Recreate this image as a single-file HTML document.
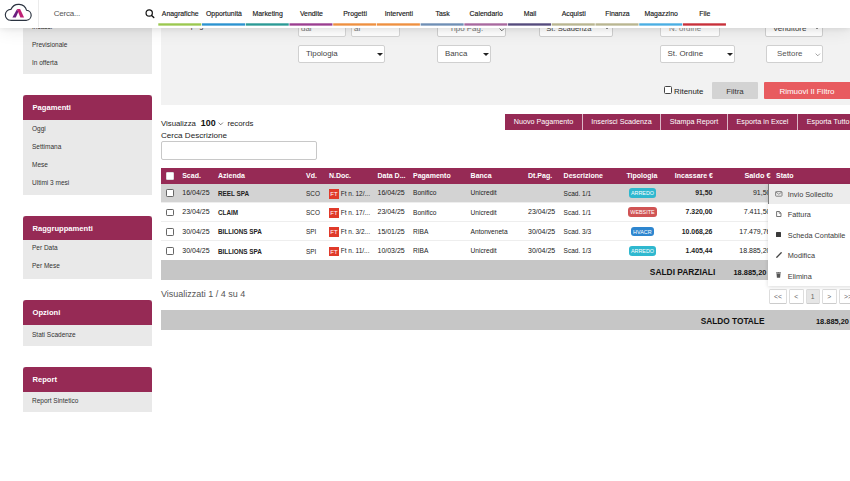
<!DOCTYPE html>
<html><head><meta charset="utf-8">
<style>
*{box-sizing:border-box;margin:0;padding:0}
html,body{width:850px;height:481px;overflow:hidden;background:#fff;font-family:"Liberation Sans",sans-serif;color:#222}
.a{position:absolute;white-space:nowrap}
#hdr{position:absolute;left:0;top:0;width:850px;height:28px;background:#fff;z-index:10;box-shadow:0 1px 5px rgba(0,0,0,0.07),0 2px 18px rgba(0,0,0,0.09)}
.nav{position:absolute;top:0;height:28px;width:43.7px}
.nav span{position:absolute;left:0;right:0;top:9.65px;text-align:center;font-size:6.9px;font-weight:normal;color:#1a1a1a;-webkit-text-stroke:0.15px #1a1a1a}
.nav i{position:absolute;left:0.5px;right:0.5px;top:23.2px;height:2.5px}
/* sidebar */
.sb{position:absolute;left:23px;width:129px;background:#e9e9e9}
.sbh{position:absolute;left:23px;width:129px;height:24.5px;background:#962a55;border-radius:3px 3px 0 0;color:#fff;font-weight:bold;font-size:7.6px;padding:8px 0 0 9.5px}
.sbi{position:absolute;left:32px;font-size:6.5px;color:#333;white-space:nowrap}
/* filter */
#flt{position:absolute;left:161px;top:20px;width:689px;height:84.6px;background:#f2f2f2}
.inp{position:absolute;background:#fff;border:1px solid #d6d6d6;border-radius:2px;font-size:7.2px;color:#999}
.sel{position:absolute;background:#fff;border:1px solid #d0d0d0;border-radius:2px;font-size:7.2px;color:#444}
.t{position:absolute;white-space:nowrap;font-size:7.9px;line-height:normal}
.caret{position:absolute;width:0;height:0;border-left:3.5px solid transparent;border-right:3.5px solid transparent;border-top:3.5px solid #222}
/* table */
.btn{position:absolute;top:114px;height:15.6px;background:#962a55;color:#fff;font-size:7.2px;line-height:7.2px;text-align:center;padding-top:4.4px}
.th{position:absolute;font-size:7px;line-height:normal;font-weight:bold;color:#fff}
.td{position:absolute;font-size:6.8px;color:#222}
.b{font-weight:bold}
.cb{position:absolute;left:166.1px;width:7.5px;height:7.5px;border:0.9px solid #666;border-radius:1.2px;background:#fff}
.ft{position:absolute;left:328.5px;width:10.9px;height:9.8px;background:#e03a2a;color:#fff;font-size:6px;line-height:10.8px;text-align:center}
.bdg{position:absolute;height:9.8px;border-radius:3px;color:#fff;font-size:5.4px;line-height:11.6px;text-align:center}
.pg{position:absolute;top:288.5px;height:15.2px;border:1px solid #ddd;border-bottom-color:#ccc;border-radius:1.5px;background:#fff;font-size:6.8px;color:#666;text-align:center;line-height:13.2px}
.dd{position:absolute;left:20.1px;font-size:7.3px;line-height:7.3px;color:#3a3a3a;white-space:nowrap}
</style></head><body>

<div id="hdr">
  <svg class="a" style="left:0;top:0" width="45" height="28" viewBox="0 0 45 28">
    <path d="M10.6,20.3 A5.45,5.45 0 1 1 11.0,9.35 A8.3,8.3 0 0 1 26.6,10.3 A5.02,5.02 0 0 1 26.6,20.3 Z" fill="none" stroke="#2b3340" stroke-width="1.15"/>
    <path d="M12.4,17.5 L15.8,17.5 L18.5,11.5 L16.8,9.6 Z" fill="#6b1f7f"/>
    <path d="M16.9,9 L20.1,9 L24.1,17.5 L20.4,17.5 Z" fill="#bf2275"/>
  </svg>
  <div class="a" style="left:38px;top:0;width:1px;height:26.5px;background:#ebebeb"></div>
  <div class="a" style="left:53.7px;top:9.35px;font-size:8px;letter-spacing:-0.2px;line-height:normal;color:#555">Cerca...</div>
  <svg class="a" style="left:144px;top:8px" width="12" height="12" viewBox="0 0 12 12">
    <circle cx="5.2" cy="4.95" r="3.15" fill="none" stroke="#111" stroke-width="1.2"/>
    <path d="M7.6,7.4 L9.8,9.6" stroke="#111" stroke-width="1.35" stroke-linecap="round"/>
  </svg>
  <div class="nav" style="left:158.40px"><span>Anagrafiche</span></div>
  <div class="nav" style="left:202.12px"><span>Opportunità</span></div>
  <div class="nav" style="left:245.84px"><span>Marketing</span></div>
  <div class="nav" style="left:289.56px"><span>Vendite</span></div>
  <div class="nav" style="left:333.28px"><span>Progetti</span></div>
  <div class="nav" style="left:377.00px"><span>Interventi</span></div>
  <div class="nav" style="left:420.72px"><span>Task</span></div>
  <div class="nav" style="left:464.44px"><span>Calendario</span></div>
  <div class="nav" style="left:508.16px"><span>Mail</span></div>
  <div class="nav" style="left:551.88px"><span>Acquisti</span></div>
  <div class="nav" style="left:595.60px"><span>Finanza</span></div>
  <div class="nav" style="left:639.32px"><span>Magazzino</span></div>
  <div class="nav" style="left:683.04px"><span>File</span></div>
<svg class="a" style="left:0;top:22px" width="850" height="5" viewBox="0 0 850 5"><rect x="158.30" y="1.3" width="43.0" height="2.35" fill="#9bc84f"/><rect x="202.02" y="1.3" width="43.0" height="2.35" fill="#2b93d0"/><rect x="245.74" y="1.3" width="43.0" height="2.35" fill="#2b9a96"/><rect x="289.46" y="1.3" width="43.0" height="2.35" fill="#9b3e90"/><rect x="333.18" y="1.3" width="43.0" height="2.35" fill="#ee9040"/><rect x="376.90" y="1.3" width="43.0" height="2.35" fill="#ee9040"/><rect x="420.62" y="1.3" width="43.0" height="2.35" fill="#6f8fb5"/><rect x="464.34" y="1.3" width="43.0" height="2.35" fill="#a8699f"/><rect x="508.06" y="1.3" width="43.0" height="2.35" fill="#554b7d"/><rect x="551.78" y="1.3" width="43.0" height="2.35" fill="#b9b691"/><rect x="595.50" y="1.3" width="43.0" height="2.35" fill="#b9b691"/><rect x="639.22" y="1.3" width="43.0" height="2.35" fill="#4aaee3"/><rect x="682.94" y="1.3" width="43.0" height="2.35" fill="#c8303a"/></svg>
</div>

<!-- sidebar -->
<div class="sb" style="top:0;height:73.6px"></div>
<div class="sbi" style="top:23px">Incassi</div>
<div class="sbi" style="top:41px">Previsionale</div>
<div class="sbi" style="top:59px">In offerta</div>

<div class="sb" style="top:95px;height:99.5px"></div>
<div class="sbh" style="top:95px">Pagamenti</div>
<div class="sbi" style="top:125px">Oggi</div>
<div class="sbi" style="top:143px">Settimana</div>
<div class="sbi" style="top:161px">Mese</div>
<div class="sbi" style="top:179px">Ultimi 3 mesi</div>

<div class="sb" style="top:215.6px;height:63.4px"></div>
<div class="sbh" style="top:215.6px">Raggruppamenti</div>
<div class="sbi" style="top:244px">Per Data</div>
<div class="sbi" style="top:262px">Per Mese</div>

<div class="sb" style="top:300.3px;height:45.7px"></div>
<div class="sbh" style="top:300.3px">Opzioni</div>
<div class="sbi" style="top:330.5px">Stati Scadenze</div>

<div class="sb" style="top:367px;height:45.4px"></div>
<div class="sbh" style="top:367px">Report</div>
<div class="sbi" style="top:397px">Report Sintetico</div>

<!-- filter -->
<div id="flt"></div>
<div class="a" style="left:172.7px;top:20.8px;font-size:7.6px;color:#444">Data pagamento scadenze</div>
<div class="inp" style="left:298px;top:20px;width:48px;height:17px"><span class="t" style="left:2px;top:3.2px;color:#777">dal</span></div>
<div class="inp" style="left:351px;top:20px;width:49px;height:17px"><span class="t" style="left:2px;top:3.2px;color:#777">al</span></div>
<div class="sel" style="left:437px;top:20px;width:69px;height:17px;color:#777"><span class="t" style="left:11.6px;top:3.4px">Tipo Pag.</span><svg class="a" style="left:60.5px;top:6.5px" width="6" height="4" viewBox="0 0 6 4"><path d="M0.6,0.6 L2.8,2.8 L5,0.6" fill="none" stroke="#555" stroke-width="0.85"/></svg></div>
<div class="sel" style="left:539px;top:20px;width:74px;height:17px"><span class="t" style="left:6.3px;top:3.4px;font-size:7.6px">St. Scadenza</span><i class="caret" style="left:64px;top:5px"></i></div>
<div class="inp" style="left:660px;top:20px;width:60px;height:17px"><span class="t" style="left:8px;top:3.2px;color:#888">N. ordine</span></div>
<div class="sel" style="left:765px;top:20px;width:58px;height:17px"><span class="t" style="left:7px;top:3.2px">Venditore</span><i class="caret" style="left:48px;top:5px"></i></div>

<div class="sel" style="left:298px;top:45px;width:87px;height:18px"><span class="t" style="left:7px;top:2.9px">Tipologia</span><i class="caret" style="left:77.5px;top:6.8px"></i></div>
<div class="sel" style="left:437px;top:45px;width:54px;height:18px"><span class="t" style="left:6.9px;top:2.9px">Banca</span><i class="caret" style="left:44.5px;top:6.8px"></i></div>
<div class="sel" style="left:660px;top:45px;width:75px;height:18px"><span class="t" style="left:6.6px;top:2.9px">St. Ordine</span><i class="caret" style="left:65.5px;top:6.8px"></i></div>
<div class="sel" style="left:766px;top:45px;width:57px;height:18px;color:#555"><span class="t" style="left:10px;top:2.9px">Settore</span><svg class="a" style="left:47.6px;top:6.6px" width="6" height="4" viewBox="0 0 6 4"><path d="M0.6,0.6 L2.8,2.8 L5,0.6" fill="none" stroke="#666" stroke-width="0.6"/></svg></div>

<div class="a" style="left:664px;top:86.2px;width:7.8px;height:7.8px;border:0.8px solid #444;border-radius:1.5px;background:#fff"></div>
<div class="a" style="left:674px;top:86.7px;font-size:7.9px;line-height:normal;color:#222">Ritenute</div>
<div class="a" style="left:712px;top:82px;width:46px;height:17px;background:#d3d3d3;border-radius:1px;font-size:7.9px;color:#333;text-align:center;line-height:19px">Filtra</div>
<div class="a" style="left:764px;top:82px;width:90px;height:17px;background:#e85b5f;border-radius:1px;font-size:8px;color:#fff;padding-left:15.4px;line-height:19px">Rimuovi Il Filtro</div>

<!-- table controls -->
<div class="a" style="left:161px;top:119px;font-size:7.8px;color:#222">Visualizza</div>
<div class="a" style="left:200.8px;top:117.8px;font-size:8.9px;font-weight:bold;color:#111">100</div>
<svg class="a" style="left:218.3px;top:121.5px" width="6" height="4" viewBox="0 0 6 4"><path d="M0.5,0.6 L2.7,2.8 L4.9,0.6" fill="none" stroke="#444" stroke-width="0.7"/></svg>
<div class="a" style="left:227.4px;top:119px;font-size:7.8px;color:#222">records</div>
<div class="a" style="left:161px;top:131px;font-size:8.1px;color:#222">Cerca Descrizione</div>
<div class="a" style="left:161px;top:141px;width:156px;height:19px;border:1px solid #c8c8c8;border-radius:2px;background:#fff"></div>

<div class="a" style="left:505px;top:114px;width:345px;height:15.6px;background:#962a55"></div>
<div class="btn" style="left:505px;width:77px">Nuovo Pagamento</div>
<div class="btn" style="left:583px;width:77px">Inserisci Scadenza</div>
<div class="btn" style="left:661px;width:66px">Stampa Report</div>
<div class="btn" style="left:728px;width:69px">Esporta in Excel</div>
<div class="btn" style="left:798px;width:60px;text-align:left;padding-left:8.8px">Esporta Tutto</div>
<div class="a" style="left:582px;top:114px;width:1px;height:15.6px;background:#dcb8c7"></div>
<div class="a" style="left:660px;top:114px;width:1px;height:15.6px;background:#dcb8c7"></div>
<div class="a" style="left:727px;top:114px;width:1px;height:15.6px;background:#dcb8c7"></div>
<div class="a" style="left:797px;top:114px;width:1px;height:15.6px;background:#dcb8c7"></div>

<!-- table -->
<div class="a" style="left:161px;top:168px;width:689px;height:15.6px;background:#962a55"></div>
<div class="a" style="left:166.2px;top:172.2px;width:7.6px;height:7.7px;border-radius:1px;background:#fff;border:0.6px solid #ddd"></div>

<div class="th" style="left:182.2px;top:172px">Scad.</div>
<div class="th" style="left:218px;top:172px">Azienda</div>
<div class="th" style="left:306px;top:172px">Vd.</div>
<div class="th" style="left:328.9px;top:172px">N.Doc.</div>
<div class="th" style="left:377.5px;top:172px">Data D...</div>
<div class="th" style="left:413px;top:172px">Pagamento</div>
<div class="th" style="left:470.6px;top:172px">Banca</div>
<div class="th" style="left:528px;top:172px">Dt.Pag.</div>
<div class="th" style="left:563.6px;top:172px">Descrizione</div>
<div class="th" style="left:626.4px;top:172px">Tipologia</div>
<div class="th" style="left:776px;top:172px">Stato</div>
<div class="th" style="right:137px;top:172px">Incassare €</div>
<div class="th" style="right:79.5px;top:171.4px;font-size:7.35px">Saldo €</div>
<div class="a" style="left:161px;top:183.6px;width:689px;height:19.3px;background:#d3d3d3;border-bottom:1px solid #eee"></div>
<div class="cb" style="top:189.45px"></div>
<div class="td" style="left:182.3px;top:189.05px;font-size:7px">16/04/25</div>
<div class="td b" style="left:218px;top:189.65px;font-size:6.35px">REEL SPA</div>
<div class="td" style="left:306px;top:189.60px;font-size:6.4px">SCO</div>
<div class="ft" style="top:188.80px">FT</div>
<div class="td" style="left:340.7px;top:189.51px;font-size:6.5px">Ft n. 12/...</div>
<div class="td" style="left:377.5px;top:189.05px;font-size:7px">16/04/25</div>
<div class="td" style="left:413px;top:189.42px;font-size:6.6px">Bonifico</div>
<div class="td" style="left:470.6px;top:189.42px;font-size:6.6px">Unicredit</div>
<div class="td" style="left:563.6px;top:189.51px;font-size:6.5px">Scad. 1/1</div>
<div class="bdg" style="left:628.7px;top:187.90px;width:27.6px;background:#2fb8cf">ARREDO</div>
<div class="td b" style="right:137.6px;top:189.14px;font-size:6.9px">91,50</div>
<div class="td" style="right:79.5px;top:189.05px;font-size:7px">91,50</div>
<div class="a" style="left:161px;top:202.9px;width:689px;height:19.3px;background:#fff;border-bottom:1px solid #eee"></div>
<div class="cb" style="top:208.75px"></div>
<div class="td" style="left:182.3px;top:208.35px;font-size:7px">23/04/25</div>
<div class="td b" style="left:218px;top:208.95px;font-size:6.35px">CLAIM</div>
<div class="td" style="left:306px;top:208.90px;font-size:6.4px">SCO</div>
<div class="ft" style="top:208.10px">FT</div>
<div class="td" style="left:340.7px;top:208.81px;font-size:6.5px">Ft n. 17/...</div>
<div class="td" style="left:377.5px;top:208.35px;font-size:7px">23/04/25</div>
<div class="td" style="left:413px;top:208.72px;font-size:6.6px">Bonifico</div>
<div class="td" style="left:470.6px;top:208.72px;font-size:6.6px">Unicredit</div>
<div class="td" style="left:528px;top:208.35px;font-size:7px">23/04/25</div>
<div class="td" style="left:563.6px;top:208.81px;font-size:6.5px">Scad. 1/1</div>
<div class="bdg" style="left:627.9px;top:207.20px;width:29.2px;background:#d05454">WEBSITE</div>
<div class="td b" style="right:137.6px;top:208.44px;font-size:6.9px">7.320,00</div>
<div class="td" style="right:79.5px;top:208.35px;font-size:7px">7.411,50</div>
<div class="a" style="left:161px;top:222.2px;width:689px;height:19.3px;background:#fff;border-bottom:1px solid #eee"></div>
<div class="cb" style="top:228.05px"></div>
<div class="td" style="left:182.3px;top:227.65px;font-size:7px">30/04/25</div>
<div class="td b" style="left:218px;top:228.25px;font-size:6.35px">BILLIONS SPA</div>
<div class="td" style="left:306px;top:228.20px;font-size:6.4px">SPI</div>
<div class="ft" style="top:227.40px">FT</div>
<div class="td" style="left:340.7px;top:228.11px;font-size:6.5px">Ft n. 3/2...</div>
<div class="td" style="left:377.5px;top:227.65px;font-size:7px">15/01/25</div>
<div class="td" style="left:413px;top:228.02px;font-size:6.6px">RIBA</div>
<div class="td" style="left:470.6px;top:228.02px;font-size:6.6px">Antonveneta</div>
<div class="td" style="left:528px;top:227.65px;font-size:7px">30/04/25</div>
<div class="td" style="left:563.6px;top:228.11px;font-size:6.5px">Scad. 3/3</div>
<div class="bdg" style="left:630.7px;top:226.50px;width:23.3px;background:#2e86cf">HVACR</div>
<div class="td b" style="right:137.6px;top:227.74px;font-size:6.9px">10.068,26</div>
<div class="td" style="right:79.5px;top:227.65px;font-size:7px">17.479,76</div>
<div class="a" style="left:161px;top:241.5px;width:689px;height:19.3px;background:#fff;border-bottom:1px solid #eee"></div>
<div class="cb" style="top:247.35px"></div>
<div class="td" style="left:182.3px;top:246.95px;font-size:7px">30/04/25</div>
<div class="td b" style="left:218px;top:247.55px;font-size:6.35px">BILLIONS SPA</div>
<div class="td" style="left:306px;top:247.50px;font-size:6.4px">SPI</div>
<div class="ft" style="top:246.70px">FT</div>
<div class="td" style="left:340.7px;top:247.41px;font-size:6.5px">Ft n. 11/...</div>
<div class="td" style="left:377.5px;top:246.95px;font-size:7px">10/03/25</div>
<div class="td" style="left:413px;top:247.32px;font-size:6.6px">RIBA</div>
<div class="td" style="left:470.6px;top:247.32px;font-size:6.6px">Unicredit</div>
<div class="td" style="left:528px;top:246.95px;font-size:7px">30/04/25</div>
<div class="td" style="left:563.6px;top:247.41px;font-size:6.5px">Scad. 1/3</div>
<div class="bdg" style="left:628.7px;top:245.80px;width:27.6px;background:#2fb8cf">ARREDO</div>
<div class="td b" style="right:137.6px;top:247.04px;font-size:6.9px">1.405,44</div>
<div class="td" style="right:79.5px;top:246.95px;font-size:7px">18.885,20</div>

<div class="a" style="left:161px;top:260px;width:689px;height:20px;background:#c6c6c6"></div>
<div class="a b" style="right:134.7px;top:267.6px;font-size:8.4px;line-height:8.4px;color:#111">SALDI PARZIALI</div>
<div class="a b" style="left:733.5px;top:268.8px;font-size:7.4px;line-height:7.4px;color:#111">18.885,20</div>
<div class="a" style="left:161px;top:289.6px;font-size:9px;line-height:9px;color:#555">Visualizzati 1 / 4 su 4</div>
<div class="a" style="left:161px;top:310px;width:689px;height:19.5px;background:#c6c6c6"></div>
<div class="a b" style="left:700.7px;top:317.3px;font-size:8.3px;line-height:8.3px;color:#111">SALDO TOTALE</div>
<div class="a b" style="left:816px;top:318.2px;font-size:7.4px;line-height:7.4px;color:#111">18.885,20</div>

<!-- pagination -->
<div class="pg" style="left:769px;width:18px">&lt;&lt;</div>
<div class="pg" style="left:789px;width:14.5px">&lt;</div>
<div class="pg" style="left:805.5px;width:14.5px;background:#e6e6e6">1</div>
<div class="pg" style="left:822px;width:14.6px">&gt;</div>
<div class="pg" style="left:839px;width:18px">&gt;&gt;</div>

<!-- dropdown -->
<div class="a" style="left:767.7px;top:183.8px;width:90px;height:102px;background:#fff;box-shadow:0 1px 4px rgba(0,0,0,0.15);z-index:5">
  <div class="a" style="left:0;top:0;width:90px;height:20px;background:#ececec;border-left:1.3px solid #7a7a7a"></div>
  <svg class="a" style="left:7px;top:7px" width="8" height="6" viewBox="0 0 8 6"><rect x="0.6" y="0.6" width="6.4" height="4.6" rx="0.6" fill="none" stroke="#777" stroke-width="0.9"/><path d="M0.8,1 L3.8,3.3 L6.8,1" fill="none" stroke="#777" stroke-width="0.8"/></svg>
  <div class="dd" style="top:6.8px">Invio Sollecito</div>
  <svg class="a" style="left:8px;top:27.4px" width="6" height="6" viewBox="0 0 6 6"><path d="M0.6,0.5 L3.4,0.5 L5,2.1 L5,5.5 L0.6,5.5 Z" fill="none" stroke="#666" stroke-width="0.9"/><path d="M3.2,0.6 L3.2,2.3 L4.9,2.3" fill="none" stroke="#666" stroke-width="0.7"/></svg>
  <div class="dd" style="top:27px">Fattura</div>
  <div class="a" style="left:8.7px;top:48.4px;width:4.9px;height:5.1px;background:#3a3a3a;border-radius:0.5px"></div>
  <div class="dd" style="top:47.8px">Scheda Contabile</div>
  <svg class="a" style="left:8px;top:68px" width="6" height="6" viewBox="0 0 6 6"><path d="M0.8,5.2 L5.2,0.8" stroke="#444" stroke-width="1.3" stroke-linecap="round"/></svg>
  <div class="dd" style="top:68.3px">Modifica</div>
  <svg class="a" style="left:8.5px;top:88.6px" width="5" height="6" viewBox="0 0 5 6"><rect x="0" y="0.4" width="5" height="0.9" fill="#555"/><rect x="1.7" y="0" width="1.6" height="0.6" fill="#555"/><path d="M0.5,1.6 L4.5,1.6 L4.1,5.7 L0.9,5.7 Z" fill="#555"/></svg>
  <div class="dd" style="top:88.9px">Elimina</div>
</div>

</body></html>
